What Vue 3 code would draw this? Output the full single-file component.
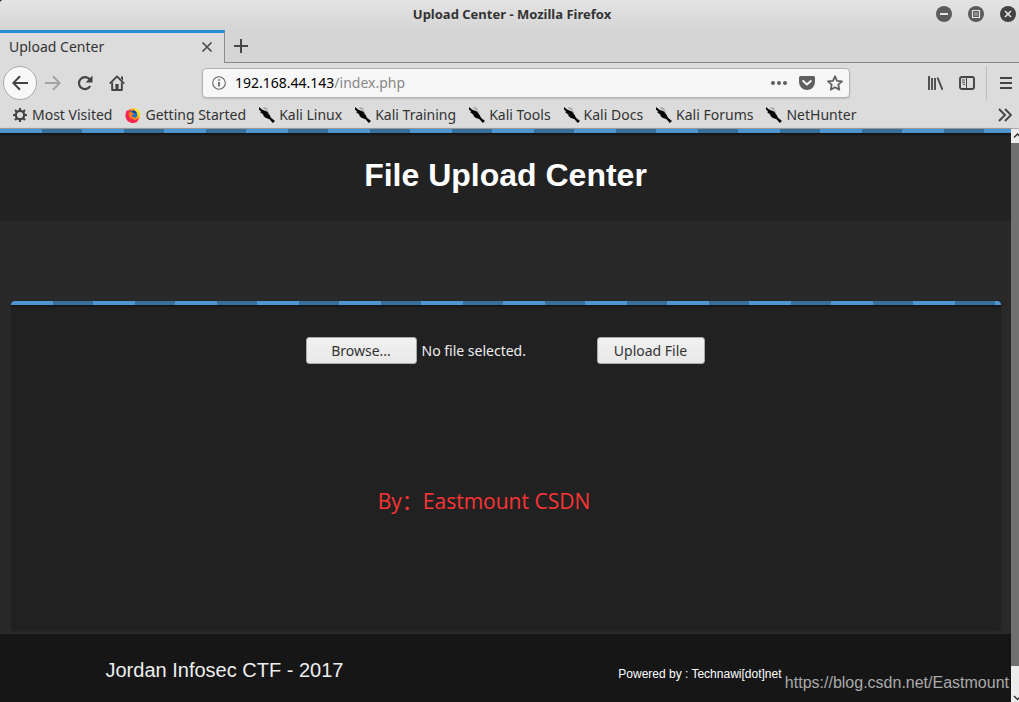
<script setup>
import { ref } from 'vue'

const links = [
  { name: 'Most Visited', icon: 'gear' },
  { name: 'Getting Started', icon: 'fox' },
  { name: 'Kali Linux', icon: 'kali' },
  { name: 'Kali Training', icon: 'kali' },
  { name: 'Kali Tools', icon: 'kali' },
  { name: 'Kali Docs', icon: 'kali' },
  { name: 'Kali Forums', icon: 'kali' },
  { name: 'NetHunter', icon: 'kali' }
]

const picker = ref(null)
const fileName = ref('No file selected.')

function onPick(event) {
  const file = event.target.files[0]
  fileName.value = file ? file.name : 'No file selected.'
}
</script>

<template>
  <div class="window">
    <header class="titlebar">
      <span class="window-title">Upload Center - Mozilla Firefox</span>
      <div class="window-controls">
        <button class="plain" aria-label="Minimize">
          <svg width="16" height="16" viewBox="0 0 16 16"><circle cx="8" cy="8" r="8" fill="#5b5b5b" /><path d="M4 8h8" stroke="#e6e6e6" stroke-width="2" /></svg>
        </button>
        <button class="plain" aria-label="Maximize">
          <svg width="16" height="16" viewBox="0 0 16 16"><circle cx="8" cy="8" r="8" fill="#5b5b5b" /><path d="M4.500 4.500h7v7h-7z" fill="none" stroke="#e6e6e6" stroke-width="1.200" /><path d="M6 6h4v4H6z" fill="#8c8c8c" /></svg>
        </button>
        <button class="plain" aria-label="Close window">
          <svg width="16" height="16" viewBox="0 0 16 16"><circle cx="8" cy="8" r="8" fill="#434343" /><path d="M5 5l6 6M11 5l-6 6" stroke="#e6e6e6" stroke-width="1.600" /></svg>
        </button>
      </div>
    </header>

    <div class="tabstrip">
      <div class="tab">
        <span>Upload Center</span>
        <button class="plain" aria-label="Close tab">
          <svg width="12" height="12" viewBox="0 0 12 12"><path d="M1.500 1.500l9 9M10.500 1.500l-9 9" stroke="#4b4b4b" stroke-width="1.700" /></svg>
        </button>
      </div>
      <div class="tab-rest">
        <button class="plain" aria-label="New tab">
          <svg width="14" height="14" viewBox="0 0 14 14"><path d="M7 0v14M0 7h14" stroke="#454545" stroke-width="2" /></svg>
        </button>
      </div>
    </div>

    <nav class="navbar" aria-label="Navigation">
      <button class="plain back" aria-label="Back">
        <svg width="16" height="16" viewBox="0 0 16 16"><path d="M16 8H1.500M8 1.300L1.300 8 8 14.700" fill="none" stroke="#444" stroke-width="2" /></svg>
      </button>
      <button class="plain nav-btn" aria-label="Forward">
        <svg width="16" height="16" viewBox="0 0 16 16"><path d="M0 8h14.500M8 1.300L14.700 8 8 14.700" fill="none" stroke="#a3a3a3" stroke-width="2" /></svg>
      </button>
      <button class="plain nav-btn" aria-label="Reload">
        <svg width="16" height="16" viewBox="0 0 16 16"><path d="M13.200 11A6 6 0 1 1 12.600 4.200" fill="none" stroke="#444" stroke-width="2.200" /><path d="M15.500 0.500v7h-7z" fill="#444" /></svg>
      </button>
      <button class="plain nav-btn" aria-label="Home">
        <svg width="16" height="16" viewBox="0 0 16 16"><path d="M0.800 8.600L8 1.400l7.200 7.200" fill="none" stroke="#444" stroke-width="1.900" stroke-linejoin="round" /><path d="M12 1.500h2v4l-2-2zM2.200 8.500L4.100 7v6.900h2.300V9h3.200v4.900h2.300V7l1.900 1.500V15q0 1-1 1H3.200q-1 0-1-1z" fill="#444" /><path d="M7.200 10.500h1.600V14H7.200z" fill="#444" /></svg>
      </button>
      <div class="urlbar">
        <svg width="14" height="14" viewBox="0 0 14 14"><circle cx="7" cy="7" r="6.300" fill="none" stroke="#666" stroke-width="1.100" /><path d="M7 6v4.500M7 3.300v1.500" stroke="#666" stroke-width="1.800" /></svg>
        <p class="address"><span class="host">192.168.44.143</span>/index.php</p>
        <button class="plain" aria-label="Page actions">
          <svg width="16" height="16" viewBox="0 0 16 16"><g fill="#5f5f5f"><circle cx="2" cy="8" r="2" /><circle cx="8" cy="8" r="2" /><circle cx="14" cy="8" r="2" /></g></svg>
        </button>
        <button class="plain" aria-label="Save to Pocket">
          <svg width="16" height="16" viewBox="0 0 16 16"><path d="M1.500 1h13q1.500 0 1.500 1.500V7a8 8 0 0 1-16 0V2.500Q0 1 1.500 1z" fill="#5f5f5f" /><path d="M4.200 6L8 9.600 11.800 6" fill="none" stroke="#f6f6f6" stroke-width="2" stroke-linecap="round" stroke-linejoin="round" /></svg>
        </button>
        <button class="plain" aria-label="Bookmark this page">
          <svg width="16" height="16" viewBox="0 0 16 16"><path d="M8 1.300l2 4.500 5 .6-3.700 3.300 1 5L8 12.200l-4.300 2.500 1-5L1 6.400l5-.6z" fill="none" stroke="#5f5f5f" stroke-width="1.800" stroke-linejoin="round" /></svg>
        </button>
      </div>
      <div class="tools">
        <button class="plain" aria-label="Library">
          <svg width="16" height="16" viewBox="0 0 16 16"><path d="M2 1v14M5 3v12M8 3v12" stroke="#444" stroke-width="1.800" /><path d="M10.500 2.500l5 12.300" stroke="#444" stroke-width="1.800" /></svg>
        </button>
        <button class="plain" aria-label="Sidebars">
          <svg width="16" height="16" viewBox="0 0 16 16"><rect x="1" y="2" width="14" height="12" rx="2" fill="none" stroke="#444" stroke-width="1.900" /><path d="M7.500 2v12M3 5h3M3 7.200h3M4 9.400h2" stroke="#444" stroke-width="1" /></svg>
        </button>
      </div>
      <div class="menu">
        <button class="plain" aria-label="Open menu">
          <svg width="12" height="16" viewBox="0 0 12 16"><path d="M0 3h12M0 8h12M0 13h12" stroke="#444" stroke-width="2" /></svg>
        </button>
      </div>
    </nav>

    <nav class="bookmarks" aria-label="Bookmarks">
      <a v-for="link in links" :key="link.name" href="#">
        <svg v-if="link.icon === 'gear'" width="16" height="16" viewBox="0 0 16 16"><circle cx="8" cy="8" r="4.200" fill="none" stroke="#444" stroke-width="2.200" /><path d="M8 1v2.500M8 12.500V15M1 8h2.500M12.500 8H15M3 3l2 2M11 11l2 2M13 3l-2 2M5 11l-2 2" stroke="#444" stroke-width="2.200" /></svg>
        <svg v-else-if="link.icon === 'fox'" width="16" height="16" viewBox="0 0 16 16">
          <circle cx="8" cy="8.500" r="7" fill="#ff9d12" />
          <path d="M1 5l1-2 1 1.200L5 2l1 3-2 3 2 3 4 2 4-2-2 4-4 1.300Q0 15 .5 8z" fill="#f5234f" />
          <path d="M8 .7q6 .8 7.300 6L14 11l-2-5z" fill="#ffe52a" />
          <circle cx="8.300" cy="7.500" r="3.900" fill="#1577cf" />
          <path d="M4 5l3 .5 2 1.500-2 1 .5 2 3 .3-2 2L5 11 3.500 8z" fill="#ff7a16" />
          <path d="M6.500 4.500q2-2 4 0L12 7l-2-.5z" fill="#164494" />
        </svg>
        <svg v-else width="16" height="16" viewBox="0 0 16 16"><path d="M0 0l3.500 2.700L8 4.500l2.800 3.800 1.200 2.500 4 3.200-2.200 2-3.300-3.700-4-1.500L4 8.500l1-.3L1 5l1.200-.3L0 2.500z" fill="#050505" /><path d="M4 .5l4 2.500 2 3M5.500 .3L8.500 2" fill="none" stroke="#888" stroke-width=".7" /></svg>
        <span>{{ link.name }}</span>
      </a>
      <button class="plain more" aria-label="More bookmarks">
        <svg width="14" height="14" viewBox="0 0 14 14"><path d="M1 1l6 6-6 6M7 1l6 6-6 6" fill="none" stroke="#444" stroke-width="1.900" /></svg>
      </button>
    </nav>

    <div class="viewport">
      <div class="page">
        <div class="page-head">
          <div class="stripes"></div>
          <h1>File Upload Center</h1>
        </div>
        <main class="card">
          <div class="stripes"></div>
          <form @submit.prevent>
            <button type="button" class="gtk browse" @click="picker.click()">Browse...</button>
            <label class="file-name" for="upload">{{ fileName }}</label>
            <input id="upload" ref="picker" type="file" hidden @change="onPick" />
            <button type="submit" class="gtk submit">Upload File</button>
          </form>
          <p class="signature" lang="zh-CN">By：Eastmount CSDN</p>
        </main>
        <footer class="page-foot">
          <div class="foot-inner">
            <p class="event">Jordan Infosec CTF - 2017</p>
            <p class="powered">Powered by : Technawi[dot]net</p>
          </div>
        </footer>
      </div>
      <div class="scrollbar" aria-hidden="true">
        <svg width="8" height="14" viewBox="0 0 8 14"><path d="M3 8.500L6.500 5 10 8.500" fill="none" stroke="#333" stroke-width="1.500" /></svg>
        <div class="track"><div class="thumb"></div></div>
        <svg width="8" height="14" viewBox="0 0 8 14"><path d="M3 8l3.500 3.500L10 8" fill="none" stroke="#333" stroke-width="1.500" /></svg>
      </div>
      <p class="watermark">https://blog.csdn.net/Eastmount</p>
    </div>
  </div>
</template>

<style>
body {
  margin: 0;
  background: #101820;
}
</style>

<style scoped>
* {
  box-sizing: border-box;
}
p,
h1 {
  margin: 0;
}
svg {
  display: block;
  flex: none;
}
.window {
  display: flex;
  flex-direction: column;
  min-height: 100vh;
  overflow: hidden;
  border-top-left-radius: 3px;
  background: linear-gradient(#e4e4e4, #d5d5d5 30px);
  color: #333;
  font: 14px/20px "Noto Sans", "Open Sans", sans-serif;
}
.plain {
  display: flex;
  align-items: center;
  justify-content: center;
  margin: 0;
  padding: 0;
  border: 0;
  background: none;
}
.titlebar {
  display: grid;
  grid-template-columns: 1fr auto 1fr;
  align-items: center;
  height: 30px;
  padding: 0 3px 2px;
}
.window-title {
  grid-column: 2;
  padding-left: 5px;
  font-size: 13px;
  font-weight: 700;
}
.window-controls {
  display: flex;
  justify-content: flex-end;
  gap: 16px;
}
.tabstrip {
  display: flex;
  height: 33px;
}
.tab {
  display: flex;
  align-items: center;
  justify-content: space-between;
  width: 225px;
  padding: 0 11px 2px 9px;
  border-top: 3px solid #2490d0;
  border-right: 1px solid #8c8c8c;
  background: #dcdcdc;
}
.tab-rest {
  display: flex;
  flex: 1;
  padding: 0 9px;
  border-bottom: 1px solid #858585;
}
.navbar {
  display: flex;
  align-items: center;
  height: 40px;
  padding-left: 3px;
  background: #dcdcdc;
}
.back {
  width: 34px;
  height: 34px;
  border: 1px solid #aaa;
  border-radius: 50%;
  background: #f8f8f8;
}
.nav-btn {
  width: 32px;
  height: 32px;
}
.urlbar {
  display: flex;
  flex: 1;
  align-items: center;
  gap: 12px;
  height: 30px;
  margin-left: 69px;
  padding: 0 6px 0 9px;
  border: 1px solid #b2b2b2;
  border-radius: 4px;
  background: #f7f7f7;
  box-shadow: 0 1px 2px #0002;
}
.address {
  flex: 1;
  margin-left: -3px;
  color: #888;
}
.host {
  color: #000;
}
.tools {
  display: flex;
  gap: 16px;
  margin: 0 11px 0 77px;
}
.menu {
  display: flex;
  align-items: center;
  height: 34px;
  padding: 0 7px 0 13px;
  border-left: 1px solid #bdbdbd;
}
.bookmarks {
  display: flex;
  align-items: center;
  gap: 13px;
  height: 26px;
  padding: 0 7px 2px 12px;
  border-bottom: 1px solid #a6a6a6;
  background: #dcdcdc;
}
.bookmarks a {
  display: flex;
  align-items: center;
  gap: 4px;
  color: inherit;
  text-decoration: none;
  white-space: nowrap;
}
.more {
  margin-left: auto;
}
.viewport {
  position: relative;
  display: flex;
  flex: 1;
}
.page {
  display: flex;
  flex: 1;
  flex-direction: column;
  background: #29292a;
  font-family: "Liberation Sans", Arial, sans-serif;
}
.stripes {
  height: 4px;
  background: repeating-linear-gradient(90deg, #4d96d1 0 42px, #376f9b 42px 82px);
  box-shadow: 0 1px 3px #000a;
}
.page-head {
  height: 92px;
  background: #222223;
}
.page-head h1 {
  padding-top: 22px;
  color: #fff;
  font-size: 32px;
  line-height: 40px;
  text-align: center;
}
.card {
  flex: 1;
  margin: 80px 10px 3px 11px;
  overflow: hidden;
  border-radius: 4px;
  background: #212122;
  box-shadow: 0 0 2px #0004;
}
form {
  display: flex;
  align-items: center;
  justify-content: center;
  padding: 32px 2px 0 0;
  font: 14px/20px "Noto Sans", "Open Sans", sans-serif;
}
.gtk {
  height: 27px;
  padding: 0;
  border: 1px solid #aaa;
  border-radius: 3px;
  background: linear-gradient(#f1f1f1, #e8e8e8);
  color: #333;
  font: inherit;
}
.browse {
  width: 111px;
}
.submit {
  width: 108px;
}
.file-name {
  width: 180px;
  padding-left: 5px;
  color: #eee;
}
.signature {
  padding: 122px 44px 0 0;
  color: #fb3434;
  font: 21px/30px "Open Sans", "Noto Sans CJK SC", sans-serif;
  text-align: center;
}
.page-foot {
  padding: 25px 0 21px;
  background: #161617;
  color: #eee;
}
.foot-inner {
  display: flex;
  align-items: center;
  justify-content: space-between;
  max-width: 800px;
  margin: 0 auto;
  padding-right: 124px;
}
.event {
  font-size: 20px;
}
.powered {
  padding-top: 8px;
  color: #fff;
  font-size: 12px;
  line-height: 14px;
}
.scrollbar {
  display: flex;
  flex-direction: column;
  width: 8px;
  background: #ececec;
}
.track {
  flex: 1;
}
.thumb {
  height: 96%;
  background: #707070;
}
.watermark {
  position: absolute;
  right: 10px;
  bottom: 9px;
  color: #aaa;
  font: 16px/20px "Liberation Sans", Arial, sans-serif;
}
</style>
